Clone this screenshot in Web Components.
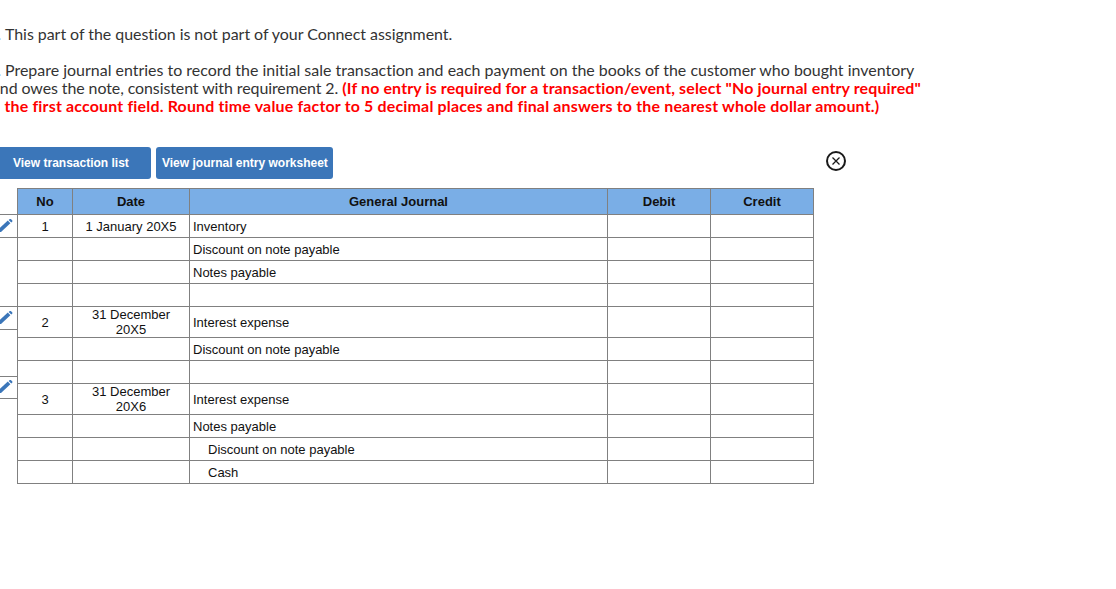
<!DOCTYPE html>
<html>
<head>
<meta charset="utf-8">
<title>Journal entry</title>
<style>
    html, body { margin: 0; padding: 0; background: #fff; overflow: hidden; }
</style>
</head>
<body>
<question-text></question-text>
<action-bar>
    <action-button>View transaction list</action-button>
    <action-button wide>View journal entry worksheet</action-button>
    <close-icon slot="end"></close-icon>
</action-bar>
<journal-table></journal-table>

<script>
class QuestionText extends HTMLElement {
    constructor() {
        super();
        this.shadow = this.attachShadow({ mode: 'open' });
        this.shadow.innerHTML = `
            <style>
                :host {
                    display: block;
                    padding-top: 25px;
                    margin-left: -8px;
                    font: 15.95px/18px Lato, sans-serif;
                    font-variant-ligatures: none;
                    color: #333;
                    white-space: nowrap;
                }
                p { margin: 0 0 18px; }
                .in { display: block; }
                .one { letter-spacing: -.03px; }
                .two { letter-spacing: .01px; }
                .three { letter-spacing: -.08px; }
                .mark { display: inline-block; width: 9px; margin-right: 4px; text-align: right; }
                .red { color: #f00; font-weight: 700; letter-spacing: .145px; }
                .last { display: block; margin-left: -5px; letter-spacing: .18px; }
            </style>
            <p><span class="in one"><span class="mark">.</span>This part of the question is not part of your Connect assignment.</span></p>
            <p>
                <span class="in two"><span class="mark">.</span>Prepare journal entries to record the initial sale transaction and each payment on the books of the customer who bought inventory</span>
                <span class="three">and owes the note, consistent with requirement 2.</span> <span class="red">(If no entry is required for a transaction/event, select "No journal entry required"</span>
                <span class="red last">in the first account field. Round time value factor to 5 decimal places and final answers to the nearest whole dollar amount.)</span>
            </p>
        `;
    }
}

class ActionBar extends HTMLElement {
    constructor() {
        super();
        this.shadow = this.attachShadow({ mode: 'open' });
        this.shadow.innerHTML = `
            <style>
                :host {
                    display: flex;
                    align-items: center;
                    gap: 5px;
                    width: 846px;
                    margin-top: 32px;
                }
                .end { margin-left: auto; display: flex; margin-bottom: 4px; }
            </style>
            <slot></slot>
            <div class="end"><slot name="end"></slot></div>
        `;
    }
}

class ActionButton extends HTMLElement {
    constructor() {
        super();
        this.shadow = this.attachShadow({ mode: 'open' });
        this.shadow.innerHTML = `
            <style>
                :host {
                    display: block;
                    box-sizing: border-box;
                    width: 151px;
                    height: 32px;
                    padding-left: 13px;
                    background: #3b76b9;
                    border-radius: 0 3px 3px 0;
                    color: #fff;
                    font: bold 12px/33px "Liberation Sans", Arial, sans-serif;
                    white-space: nowrap;
                }
                :host([wide]) {
                    width: 177px;
                    padding-left: 6px;
                    border-radius: 3px;
                }
            </style>
            <slot></slot>
        `;
    }
}

class CloseIcon extends HTMLElement {
    constructor() {
        super();
        this.shadow = this.attachShadow({ mode: 'open' });
        this.shadow.innerHTML = `
            <style>
                :host { display: block; width: 20px; height: 20px; }
                svg { display: block; }
            </style>
            <svg width="20" height="20" viewBox="0 0 20 20" fill="none" stroke="#1a1a1a">
                <circle cx="10" cy="10" r="9" stroke-width="2"/>
                <path d="M6.5 6.5l7 7M13.5 6.5l-7 7" stroke-width="1.3"/>
            </svg>
        `;
    }
}

class EditTab extends HTMLElement {
    constructor() {
        super();
        this.shadow = this.attachShadow({ mode: 'open' });
        this.shadow.innerHTML = `
            <style>
                :host {
                    position: absolute;
                    left: 0;
                    width: 17px;
                    box-sizing: border-box;
                    border-top: 1px solid #808080;
                    border-bottom: 1px solid #808080;
                }
                svg { position: absolute; left: 0; bottom: 4px; display: block; }
            </style>
            <svg width="15" height="15" viewBox="0 0 15 15">
                <path d="M-2 14L-2 11.5 7.8 2.6 10.4 5.2 1 14Z" fill="#3b76b9"/>
                <path d="M8.6 1.9l1.2-1h1l1.6 1.6v1l-1.1 1Z" fill="#3b76b9"/>
            </svg>
        `;
    }
}

class JournalTable extends HTMLElement {
    constructor() {
        super();
        this.shadow = this.attachShadow({ mode: 'open' });
        // tall rows hold the wrapped date
        const rows = [
            ['1', '1 January 20X5', 'Inventory', 0, 23],
            ['', '', 'Discount on note payable', 0, 23],
            ['', '', 'Notes payable', 0, 23],
            ['', '', '', 0, 23],
            ['2', '31 December 20X5', 'Interest expense', 0, 31],
            ['', '', 'Discount on note payable', 0, 23],
            ['', '', '', 0, 23],
            ['3', '31 December 20X6', 'Interest expense', 0, 31],
            ['', '', 'Notes payable', 0, 23],
            ['', '', 'Discount on note payable', 1, 23],
            ['', '', 'Cash', 1, 23]
        ];
        const body = rows.map(r => `
            <tr style="height:${r[4]}px">
                <td class="c">${r[0]}</td>
                <td class="c">${r[1]}</td>
                <td class="${r[3] ? 'ind' : ''}">${r[2]}</td>
                <td></td>
                <td></td>
            </tr>`).join('');
        this.shadow.innerHTML = `
            <style>
                :host {
                    display: block;
                    position: relative;
                    margin-top: 9px;
                    padding-left: 17px;
                    font: 13px/15px "Liberation Sans", Arial, sans-serif;
                    color: #111;
                }
                table {
                    border-collapse: collapse;
                    table-layout: fixed;
                    width: 797px;
                }
                th, td {
                    border: 1px solid #808080;
                    padding: 0 3px;
                    box-sizing: border-box;
                }
                th {
                    background: #7aaee6;
                    height: 26px;
                }
                .c { text-align: center; }
                .ind { padding-left: 18px; }
                edit-tab:nth-of-type(1) { top: 26px; height: 24px; }
                edit-tab:nth-of-type(2) { top: 118px; height: 24px; }
                edit-tab:nth-of-type(3) { top: 188px; height: 23px; }
            </style>
            <table>
                <colgroup>
                    <col style="width:55px"><col style="width:117px"><col style="width:418px"><col style="width:103px"><col style="width:103px">
                </colgroup>
                <tr>
                    <th>No</th><th>Date</th><th>General Journal</th><th>Debit</th><th>Credit</th>
                </tr>
                ${body}
            </table>
            <edit-tab></edit-tab>
            <edit-tab></edit-tab>
            <edit-tab></edit-tab>
        `;
    }
}

customElements.define('question-text', QuestionText);
customElements.define('action-bar', ActionBar);
customElements.define('action-button', ActionButton);
customElements.define('close-icon', CloseIcon);
customElements.define('edit-tab', EditTab);
customElements.define('journal-table', JournalTable);
</script>
</body>
</html>
